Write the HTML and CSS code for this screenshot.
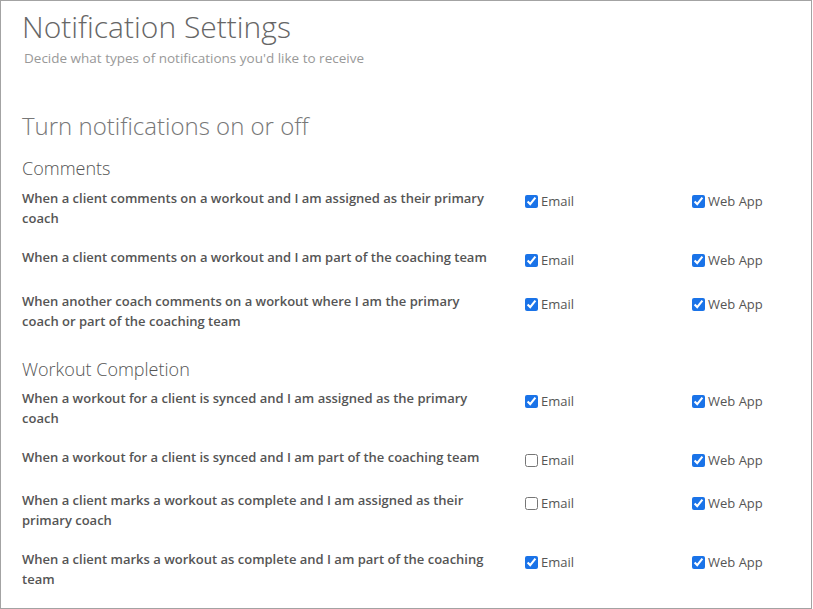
FILE: index.html
```html
<!DOCTYPE html>
<html>
<head>
<meta charset="utf-8">
<link rel="stylesheet" href="styles.css">
</head>
<body>
<div class="frame">
  <header class="page-head">
    <h1 class="title">Notification Settings</h1>
    <p class="subtitle">Decide what types of notifications you'd like to receive</p>
  </header>
  <h2 class="section-title">Turn notifications on or off</h2>

  <h3 class="group-title">Comments</h3>
  <div class="row">
    <div class="desc">When a client comments on a workout and I am assigned as their primary coach</div>
    <label class="opt"><input type="checkbox" checked>Email</label>
    <label class="opt"><input type="checkbox" checked>Web App</label>
  </div>
  <div class="row">
    <div class="desc">When a client comments on a workout and I am part of the coaching team</div>
    <label class="opt"><input type="checkbox" checked>Email</label>
    <label class="opt"><input type="checkbox" checked>Web App</label>
  </div>
  <div class="row">
    <div class="desc">When another coach comments on a workout where I am the primary coach or part of the coaching team</div>
    <label class="opt"><input type="checkbox" checked>Email</label>
    <label class="opt"><input type="checkbox" checked>Web App</label>
  </div>

  <h3 class="group-title">Workout Completion</h3>
  <div class="row">
    <div class="desc">When a workout for a client is synced and I am assigned as the primary coach</div>
    <label class="opt"><input type="checkbox" checked>Email</label>
    <label class="opt"><input type="checkbox" checked>Web App</label>
  </div>
  <div class="row row-short">
    <div class="desc">When a workout for a client is synced and I am part of the coaching team</div>
    <label class="opt"><input type="checkbox">Email</label>
    <label class="opt"><input type="checkbox" checked>Web App</label>
  </div>
  <div class="row">
    <div class="desc">When a client marks a workout as complete and I am assigned as their primary coach</div>
    <label class="opt"><input type="checkbox">Email</label>
    <label class="opt"><input type="checkbox" checked>Web App</label>
  </div>
  <div class="row">
    <div class="desc">When a client marks a workout as complete and I am part of the coaching team</div>
    <label class="opt"><input type="checkbox" checked>Email</label>
    <label class="opt"><input type="checkbox" checked>Web App</label>
  </div>
</div>
</body>
</html>
```

FILE: styles.css
```css
html, body {
  margin: 0;
  padding: 0;
  background: #fff;
}
body {
  font-family: "Open Sans", "Liberation Sans", sans-serif;
  color: #555;
}
.frame {
  box-sizing: border-box;
  width: 812px;
  height: 609px;
  border: 1px solid #a3a3a3;
  padding: 0 0 0 21px;
  overflow: hidden;
}
.page-head {
  padding-top: 6px;
}
.title {
  margin: 0;
  font-size: 30px;
  font-weight: 300;
  line-height: 40px;
  color: #666;
}
.subtitle {
  margin: 2px 0 0 2px;
  font-size: 13.5px;
  line-height: 18px;
  color: #999;
}
.section-title {
  margin: 43px 0 0;
  font-size: 24px;
  font-weight: 300;
  line-height: 32px;
  color: #777;
}
.group-title {
  margin: 14px 0 8px;
  font-size: 18px;
  font-weight: 300;
  line-height: 24px;
  color: #555;
}
.row + .group-title {
  margin-top: 7px;
  margin-bottom: 7px;
}
.row {
  display: grid;
  grid-template-columns: 503px 167px 1fr;
  min-height: 44px;
  align-items: start;
}
.row-short {
  min-height: 43px;
}
.desc {
  font-size: 13px;
  font-weight: 600;
  line-height: 20px;
  padding-right: 33px;
  margin-bottom: 19px;
  color: #555;
}
.opt {
  display: flex;
  align-items: center;
  font-size: 13px;
  line-height: 20px;
  color: #555;
  padding-top: 3px;
}
.opt input {
  width: 13px;
  height: 13px;
  margin: 0 3px 0 0;
  accent-color: #1a73e8;
}
```
